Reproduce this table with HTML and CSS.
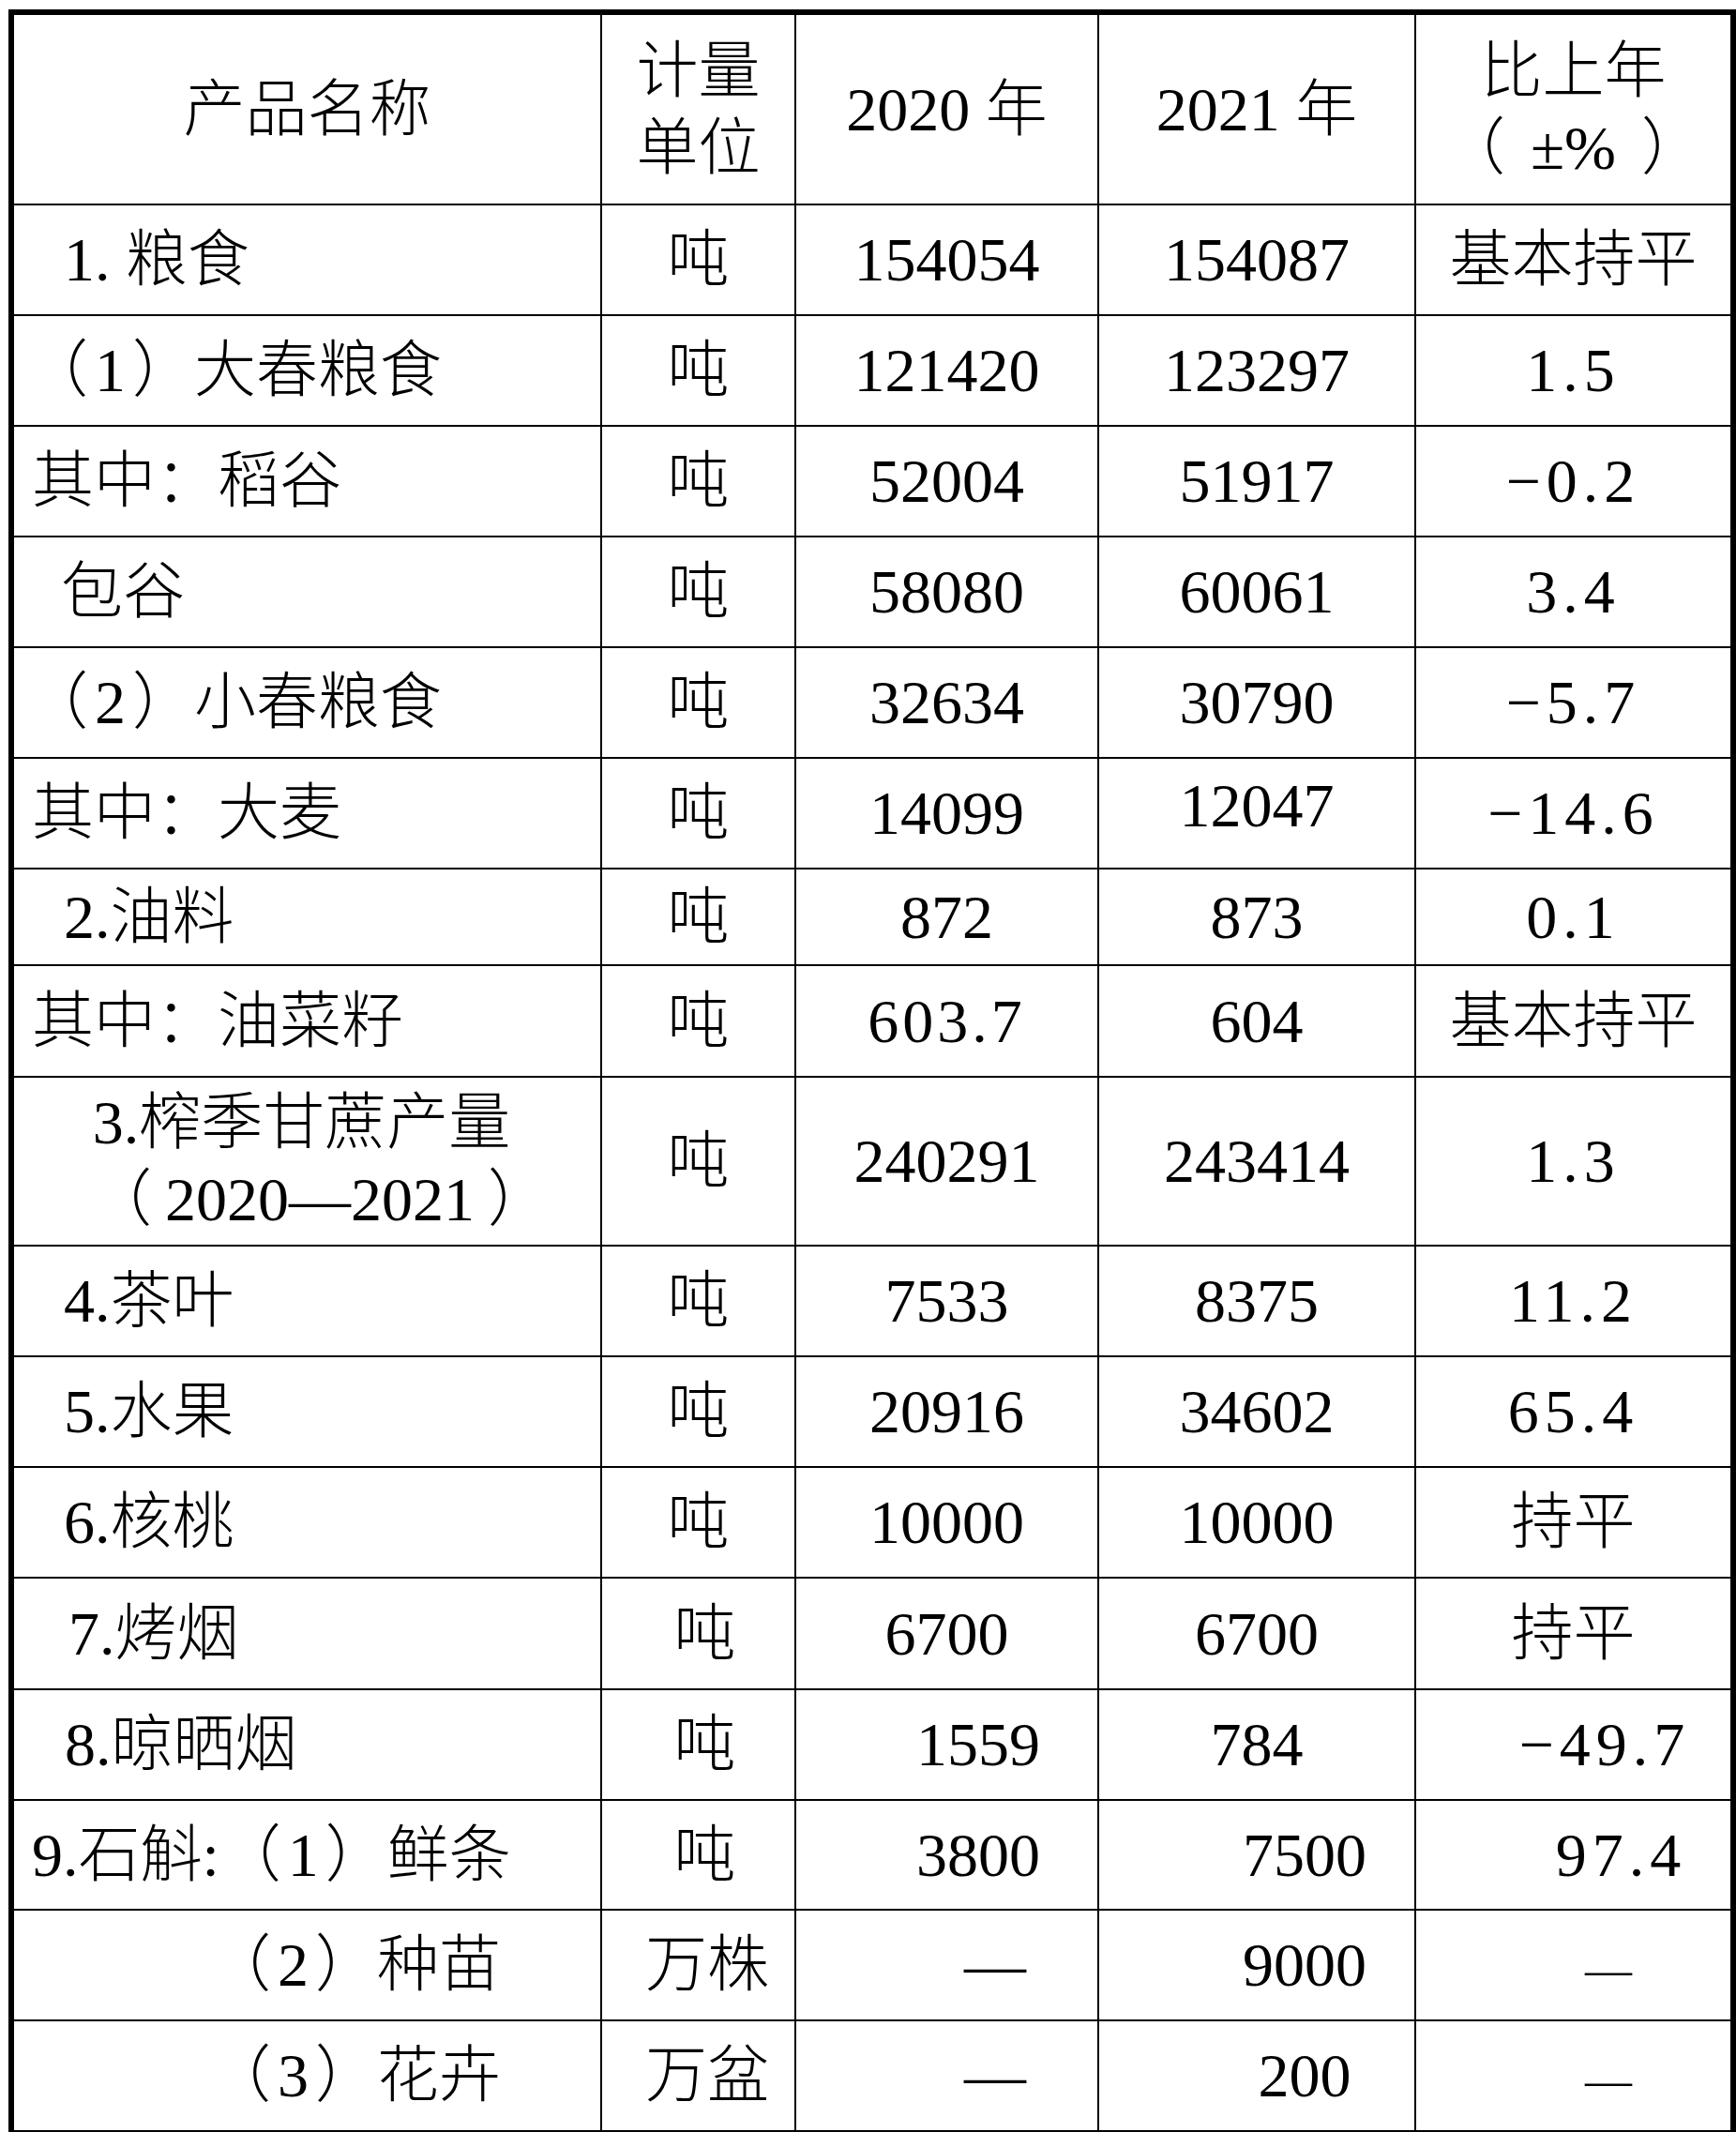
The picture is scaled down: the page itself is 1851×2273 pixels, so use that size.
FILE: index.html
```html
<!DOCTYPE html>
<html lang="zh-CN">
<head>
<meta charset="utf-8">
<title>主要农产品产量</title>
<link rel="stylesheet" href="styles.css">
</head>
<body>
<div class="sheet" role="table">
  <!-- header -->
  <div class="c head">产品名称</div>
  <div class="c head"><span class="stack">计量<br>单位</span></div>
  <div class="c head">2020 年</div>
  <div class="c head">2021 年</div>
  <div class="c head"><span class="stack">比上年<br>（<span class="pm">±%</span>）</span></div>

  <div class="c name top">1. 粮食</div>
  <div class="c unit">吨</div>
  <div class="c num">154054</div>
  <div class="c num">154087</div>
  <div class="c num">基本持平</div>

  <div class="c name paren"><span>（<span class="pn">1</span>）大春粮食</span></div>
  <div class="c unit">吨</div>
  <div class="c num">121420</div>
  <div class="c num">123297</div>
  <div class="c num pct">1.5</div>

  <div class="c name sub">其中：稻谷</div>
  <div class="c unit">吨</div>
  <div class="c num">52004</div>
  <div class="c num">51917</div>
  <div class="c num pct">−0.2</div>

  <div class="c name top-b">包谷</div>
  <div class="c unit">吨</div>
  <div class="c num">58080</div>
  <div class="c num">60061</div>
  <div class="c num pct">3.4</div>

  <div class="c name paren"><span>（<span class="pn">2</span>）小春粮食</span></div>
  <div class="c unit">吨</div>
  <div class="c num">32634</div>
  <div class="c num">30790</div>
  <div class="c num pct">−5.7</div>

  <div class="c name sub">其中：大麦</div>
  <div class="c unit">吨</div>
  <div class="c num">14099</div>
  <div class="c num raise">12047</div>
  <div class="c num pct">−14.6</div>

  <div class="c name top">2.油料</div>
  <div class="c unit">吨</div>
  <div class="c num">872</div>
  <div class="c num">873</div>
  <div class="c num pct">0.1</div>

  <div class="c name sub">其中：油菜籽</div>
  <div class="c unit">吨</div>
  <div class="c num spaced">603.7</div>
  <div class="c num">604</div>
  <div class="c num">基本持平</div>

  <div class="c two-line">
    <span class="ln">3.榨季甘蔗产量</span>
    <span class="ln season">（<span class="yr">2020—2021</span>）</span>
  </div>
  <div class="c unit">吨</div>
  <div class="c num">240291</div>
  <div class="c num">243414</div>
  <div class="c num pct">1.3</div>

  <div class="c name top">4.茶叶</div>
  <div class="c unit">吨</div>
  <div class="c num">7533</div>
  <div class="c num">8375</div>
  <div class="c num pct">11.2</div>

  <div class="c name top">5.水果</div>
  <div class="c unit">吨</div>
  <div class="c num">20916</div>
  <div class="c num">34602</div>
  <div class="c num pct">65.4</div>

  <div class="c name top">6.核桃</div>
  <div class="c unit">吨</div>
  <div class="c num">10000</div>
  <div class="c num">10000</div>
  <div class="c num">持平</div>

  <div class="c name late">7.烤烟</div>
  <div class="c unit shift">吨</div>
  <div class="c num">6700</div>
  <div class="c num">6700</div>
  <div class="c num">持平</div>

  <div class="c name late-b">8.晾晒烟</div>
  <div class="c unit shift">吨</div>
  <div class="c num shift-a">1559</div>
  <div class="c num">784</div>
  <div class="c num pct shift-a">−49.7</div>

  <div class="c name sub"><span>9.石斛:（<span class="pn">1</span>）鲜条</span></div>
  <div class="c unit shift">吨</div>
  <div class="c num shift-a">3800</div>
  <div class="c num shift-b">7500</div>
  <div class="c num pct shift-b">97.4</div>

  <div class="c name deep"><span>（<span class="pn">2</span>）种苗</span></div>
  <div class="c unit wide">万株</div>
  <div class="c num shift-c">—</div>
  <div class="c num shift-b">9000</div>
  <div class="c num dash">—</div>

  <div class="c name deep"><span>（<span class="pn">3</span>）花卉</span></div>
  <div class="c unit wide">万盆</div>
  <div class="c num shift-c">—</div>
  <div class="c num shift-b">200</div>
  <div class="c num dash">—</div>
</div>
</body>
</html>
```

FILE: styles.css
```css
html, body {
  margin: 0;
  padding: 0;
  background: #fff;
  overflow: hidden;
}

.sheet {
  display: grid;
  grid-template-columns: 627px 207px 323px 338px 335px;
  grid-template-rows: 203px 118px 118px 118px 118px 118px 118px 103px 119px 180px 118px 118px 118px 119px 118px 117px 118px 116px;
  width: max-content;
  margin: 10px 0 0 9px;
  border: 6px solid #000;
  font-family: "Liberation Serif", "Noto Sans CJK SC", serif;
  font-size: 66px;
  font-weight: 300;
  color: #000;
}

.c {
  box-sizing: border-box;
  border-right: 2px solid #000;
  border-bottom: 2px solid #000;
  display: flex;
  align-items: center;
  justify-content: center;
  text-align: center;
  line-height: 82px;
  white-space: nowrap;
}

.sheet > .c:nth-child(5n) {
  border-right: 0;
}

.sheet > .c:nth-last-child(-n+5) {
  border-bottom: 0;
}

/* header */
.stack {
  display: block;
  text-align: center;
}
.pm {
  margin: 0 27px;
}

/* product name column */
.name {
  justify-content: flex-start;
  text-align: left;
}
.top { padding-left: 53px; }
.top-b { padding-left: 50px; }
.paren { padding-left: 13px; }
.sub { padding-left: 19px; }
.late { padding-left: 58px; }
.late-b { padding-left: 54px; }
.deep { padding-left: 208px; }

.pn {
  margin: 0 7px;
}

.two-line {
  flex-direction: column;
  padding-right: 12px;
}
.ln {
  display: block;
}
.season {
  margin-left: 39px;
}
.yr {
  margin: 0 14px;
}

/* units */
.unit.shift { padding-left: 14px; }
.unit.wide { padding-left: 19px; }

/* numbers */
.pct { letter-spacing: 6px; }
.spaced { letter-spacing: 4px; }
.raise { padding-bottom: 16px; }
.shift-a { padding-left: 67px; }
.shift-b { padding-left: 102px; }
.shift-c { padding-left: 103px; }
.dash {
  font-size: 50px;
  padding-left: 75px;
  padding-top: 10px;
}
```
